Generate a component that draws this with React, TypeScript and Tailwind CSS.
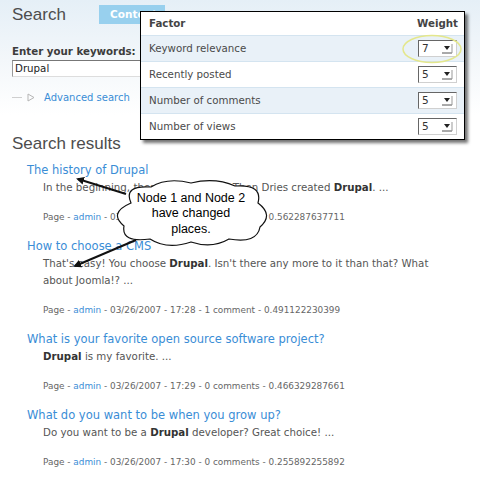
import React from 'react';

interface SearchResult {
  title: string;
  snippet: React.ReactNode;
  time: string;
  comments: string;
  score: string;
}

const results: SearchResult[] = [
  {
    title: 'The history of Drupal',
    snippet: (
      <>
        In the beginning, there was nothing. Then Dries created <b className="text-[#333]">Drupal</b>. ...
      </>
    ),
    time: '17:27',
    comments: '0 comments',
    score: '0.562287637711',
  },
  {
    title: 'How to choose a CMS',
    snippet: (
      <>
        That's easy! You choose <b className="text-[#333]">Drupal</b>. Isn't there any more to it than that? What
        about Joomla!? ...
      </>
    ),
    time: '17:28',
    comments: '1 comment',
    score: '0.491122230399',
  },
  {
    title: 'What is your favorite open source software project?',
    snippet: (
      <>
        <b className="text-[#333]">Drupal</b> is my favorite. ...
      </>
    ),
    time: '17:29',
    comments: '0 comments',
    score: '0.466329287661',
  },
  {
    title: 'What do you want to be when you grow up?',
    snippet: (
      <>
        Do you want to be a <b className="text-[#333]">Drupal</b> developer? Great choice! ...
      </>
    ),
    time: '17:30',
    comments: '0 comments',
    score: '0.255892255892',
  },
];

const factors = [
  { name: 'Keyword relevance', weight: '7' },
  { name: 'Recently posted', weight: '5' },
  { name: 'Number of comments', weight: '5' },
  { name: 'Number of views', weight: '5' },
];

const WeightSelect: React.FC<{ value: string }> = ({ value }) => (
  <div className="flex h-[17px] w-[39px] items-center border border-l-[#666] border-t-[#666] border-b-[#d0d0d0] border-r-[#d0d0d0] bg-white">
    <span className="ml-[3px] flex-1 text-[10.5px] leading-none text-[#333]">{value}</span>
    <svg width="12" height="11" viewBox="0 0 12 11" className="mr-[3px]">
      <path d="M3 3h6l-3 4z" fill="#222" />
      <path d="M1 10h10" stroke="#555" strokeWidth="1" />
      <path d="M11 1v9" stroke="#999" strokeWidth="1" />
    </svg>
  </div>
);

const FactorTable: React.FC = () => (
  <div className="absolute left-[140px] top-[11px] w-[325px] border border-black bg-white shadow-[3px_3px_3px_rgba(0,0,0,0.55)] font-['DejaVu_Sans',sans-serif]">
    <div className="flex h-[23px] items-center justify-between pl-[8px] pr-[6px] text-[10.25px] font-bold text-[#444]">
      <span>Factor</span>
      <span>Weight</span>
    </div>
    {factors.map((f, idx) => (
      <div
        key={f.name}
        className={
          'flex h-[26px] items-center justify-between border-t border-[#d4e4f0] pl-[8px] pr-[7px] text-[10.25px] text-[#4a4a4a] ' +
          (idx % 2 === 0 ? 'bg-[#e9f1f8]' : 'bg-white')
        }
      >
        <span>{f.name}</span>
        <WeightSelect value={f.weight} />
      </div>
    ))}
  </div>
);

const Callout: React.FC = () => (
  <div className="absolute left-[111px] top-[178px] h-[69px] w-[160px]">
    <svg width="160" height="69" viewBox="0 0 160 69" className="absolute inset-0">
      <path
        d="M20 25 Q12 7 40 9 Q56 -1 80 5 Q104 -1 124 8 Q152 6 147 25 Q163 37 149 49 Q146 66 118 61 Q101 71 80 64 Q56 72 39 61 Q10 65 13 48 Q-3 35 20 25 Z"
        fill="white"
        stroke="#111"
        strokeWidth="1.2"
      />
    </svg>
    <div className="relative flex h-full flex-col items-center justify-center pt-[3px] text-center font-['Liberation_Sans',sans-serif] text-[12.5px] leading-[15.5px] text-black">
      <span>Node 1 and Node 2</span>
      <span>have changed</span>
      <span>places.</span>
    </div>
  </div>
);

export default function App() {
  return (
    <div className="relative h-[484px] w-[480px] overflow-hidden bg-[linear-gradient(to_bottom,#e5eff7_0px,#f3f7fa_60px,#ffffff_115px)] font-['DejaVu_Sans',sans-serif]">
      <div className="px-[12px]">
        {/* page heading + tabs */}
        <div className="mt-[5px] flex h-[19px] items-center">
          <h1 className="w-[87px] font-['Liberation_Sans',sans-serif] text-[17px] leading-[19px] text-[#4d4d4d]">Search</h1>
          <div className="flex h-[19px] w-[66px] items-center bg-[#98d0ee] pl-[11px] text-[10.5px] font-bold text-white">
            Content
          </div>
        </div>

        {/* keyword form */}
        <div className="mt-[20px]">
          <label className="block text-[10.25px] font-bold leading-[14px] text-[#3c3c3c]">Enter your keywords:</label>
          <div className="mt-[2px] flex h-[17px] w-[200px] items-center border border-t-[#777] border-l-[#999] border-r-[#ccc] border-b-[#ddd] bg-white pl-[2px] text-[10.25px] text-[#222]">
            Drupal
          </div>
          <div className="mt-[12px] flex h-[17px] items-center">
            <span className="h-px w-[10px] bg-[#cfcfcf]" />
            <svg width="8" height="9" viewBox="0 0 8 9" className="ml-[5px]">
              <path d="M1 1 L7 4.5 L1 8 Z" fill="none" stroke="#b5b5b5" strokeWidth="1" />
            </svg>
            <a className="ml-[9px] text-[10px] text-[#3a8dd6]">Advanced search</a>
          </div>
        </div>

        {/* results */}
        <h2 className="mt-[27px] font-['Liberation_Sans',sans-serif] text-[17px] leading-[22px] text-[#4d4d4d]">Search results</h2>
        <div className="mt-[6px] pl-[15px]">
          {results.map((r, idx) => (
            <div key={r.title} className={idx > 0 ? 'mt-[11px]' : ''}>
              <a className="block text-[11.5px] leading-[18px] text-[#3a8dd6]">{r.title}</a>
              <p className="w-[412px] pl-[16px] text-[10.25px] leading-[17px] text-[#555]">{r.snippet}</p>
              <p className="mt-[13px] pl-[16px] text-[8.9px] leading-[17px] text-[#666]">
                Page - <a className="text-[#3a8dd6]">admin</a> - 03/26/2007 - {r.time} - {r.comments} - {r.score}
              </p>
            </div>
          ))}
        </div>
      </div>

      <FactorTable />

      {/* pointer arrows from the note to the swapped results */}
      <svg width="480" height="484" className="pointer-events-none absolute inset-0">
        <defs>
          <marker id="head" markerWidth="8" markerHeight="8" refX="6" refY="4" orient="auto" markerUnits="userSpaceOnUse">
            <path d="M0 0 L8 4 L0 8 Z" fill="#111" />
          </marker>
        </defs>
        <line x1="126" y1="194" x2="78" y2="179" stroke="#111" strokeWidth="2" markerEnd="url(#head)" />
        <line x1="136" y1="240" x2="75" y2="266" stroke="#111" strokeWidth="2" markerEnd="url(#head)" />
        <ellipse cx="432" cy="49" rx="29" ry="13.5" fill="none" stroke="#e4e78c" strokeWidth="1.5" />
      </svg>

      <Callout />
    </div>
  );
}
